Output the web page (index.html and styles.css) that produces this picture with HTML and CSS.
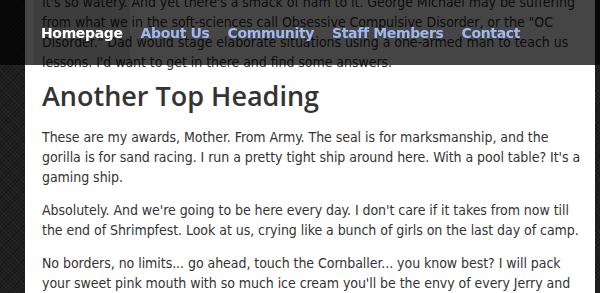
FILE: index.html
```html
<!DOCTYPE html>
<html lang="en">
<head>
    <meta charset="UTF-8">
    <title>Another Top Heading</title>
    <link rel="stylesheet" href="styles.css">
</head>
<body>
    <nav class="top-nav">
        <a class="nav-link active" href="#">Homepage</a>
        <a class="nav-link" href="#">About Us</a>
        <a class="nav-link" href="#">Community</a>
        <a class="nav-link" href="#">Staff Members</a>
        <a class="nav-link" href="#">Contact</a>
    </nav>

    <div class="page">
        <div class="content">
            <p class="lead-in">It's so watery. And yet there's a smack of ham to it. George Michael may be suffering from what we in the soft-sciences call Obsessive Compulsive Disorder, or the "OC Disorder." Dad would stage elaborate situations using a one-armed man to teach us lessons. I'd want to get in there and find some answers.</p>

            <h2>Another Top Heading</h2>

            <p>These are my awards, Mother. From Army. The seal is for marksmanship, and the gorilla is for sand racing. I run a pretty tight ship around here. With a pool table? It's a gaming ship.</p>

            <p>Absolutely. And we're going to be here every day. I don't care if it takes from now till the end of Shrimpfest. Look at us, crying like a bunch of girls on the last day of camp.</p>

            <p>No borders, no limits... go ahead, touch the Cornballer... you know best? I will pack your sweet pink mouth with so much ice cream you'll be the envy of every Jerry and Jane on the block.</p>
        </div>
    </div>
</body>
</html>
```

FILE: styles.css
```css
* {
    box-sizing: border-box;
}

body {
    margin: 0;
    background-color: #1e1e1e;
    background-image:
        repeating-linear-gradient(45deg, rgba(255, 255, 255, 0.03) 0 1px, transparent 1px 3px),
        repeating-linear-gradient(-45deg, rgba(0, 0, 0, 0.2) 0 1px, transparent 1px 3px);
    font-family: "DejaVu Sans Condensed", "DejaVu Sans", sans-serif;
    color: #333;
    overflow: hidden;
}

.top-nav {
    position: fixed;
    top: 0;
    left: 0;
    right: 0;
    height: 65px;
    display: flex;
    align-items: stretch;
    gap: 4px;
    padding-left: 34px;
    background: rgba(0, 0, 0, 0.73);
    z-index: 10;
}

.nav-link {
    display: flex;
    align-items: center;
    padding: 1px 7px 0;
    font-family: "DejaVu Sans", sans-serif;
    font-weight: bold;
    font-size: 14px;
    letter-spacing: -0.35px;
    color: #9db9f0;
    text-decoration: none;
}

.nav-link.active {
    color: #fff;
    background: rgba(0, 0, 0, 0.12);
}

.page {
    margin-left: 25px;
    width: 570px;
    background: #fff;
    margin-top: -8px;
}

.content {
    padding: 0 10px 20px 17px;
}

.content p {
    margin: 0 0 13px;
    font-size: 14px;
    letter-spacing: -0.05px;
    line-height: 20px;
}

.content p.lead-in {
    margin: 0;
}

.content h2 {
    margin: 6px 0 13px;
    font-family: "Open Sans", sans-serif;
    font-weight: 600;
    font-size: 27px;
    line-height: 36px;
    color: #333;
}
```
